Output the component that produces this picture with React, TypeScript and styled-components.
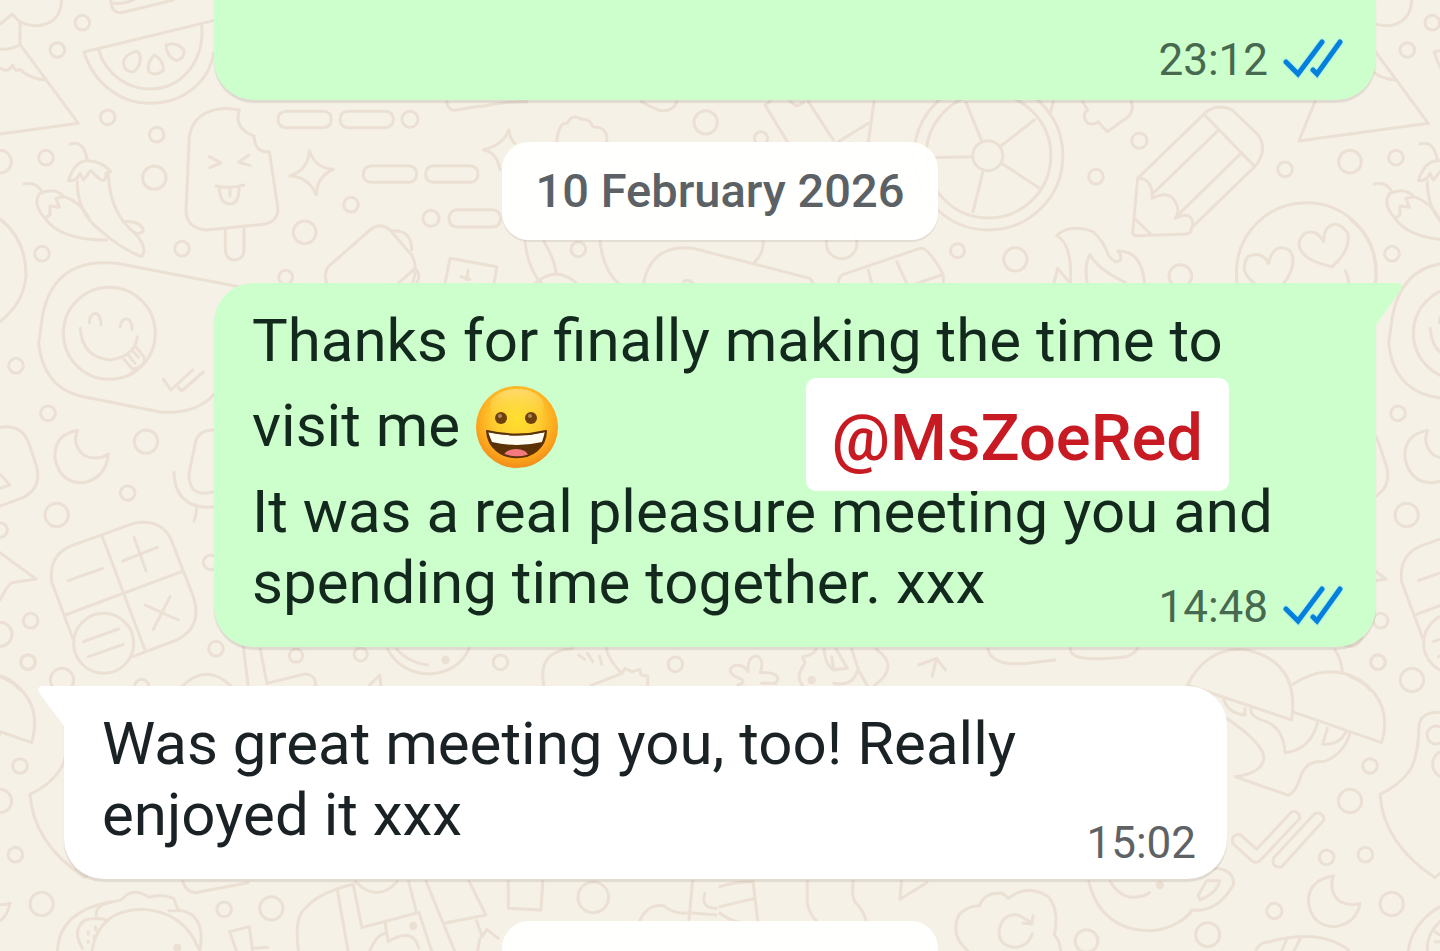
import React from 'react';
import styled, { createGlobalStyle } from 'styled-components';

const GlobalStyle = createGlobalStyle`
  * { box-sizing: border-box; }
  body { margin: 0; background: #f5f1e7; }
`;

const Screen = styled.main`
  position: relative;
  height: 100vh;
  overflow: hidden;
  background: #f5f1e7;
  font-family: Roboto, "Liberation Sans", sans-serif;
  color: #1b2226;
`;

const Wallpaper = styled.svg`
  position: absolute;
  top: 0;
  left: 0;
  fill: none;
  stroke: #ebe0d3;
  stroke-width: 3;
  stroke-linecap: round;
  stroke-linejoin: round;

  path, ellipse { vector-effect: non-scaling-stroke; }
`;

const Thread = styled.div`
  position: relative;
  display: flex;
  flex-direction: column;
`;

const Bubble = styled.article<{ $out?: boolean; $continued?: boolean }>`
  position: relative;
  display: grid;
  min-height: ${p => (p.$continued ? '100px' : '0')};
  margin: ${p => (p.$out ? '0 64px 0 214px' : '39px 213px 0 64px')};
  background: ${p => (p.$out ? '#cdffcd' : '#ffffff')};
  color: ${p => (p.$out ? '#14291d' : '#1b2226')};
  border-radius: ${p =>
    p.$continued ? '0 0 40px 40px' : p.$out ? '40px 0 40px 40px' : '0 40px 40px 40px'};
  box-shadow: 0 3px 1px rgba(70, 60, 50, 0.12);
`;

const Tail = styled.svg<{ $out?: boolean }>`
  position: absolute;
  top: 0;
  ${p => (p.$out ? 'left: 100%;' : 'right: 100%;')}
  fill: ${p => (p.$out ? '#cdffcd' : '#ffffff')};
`;

const Text = styled.p`
  grid-area: 1 / 1;
  margin: 0;
  padding: 22px 38px 29px;
  font-size: 60px;
  line-height: 71px;
`;

const Meta = styled.footer<{ $out?: boolean }>`
  grid-area: 1 / 1;
  place-self: end;
  display: flex;
  align-items: center;
  gap: 15px;
  padding: ${p => (p.$out ? '0 33px 14px 0' : '0 31px 10px 0')};
  font-size: 44px;
  line-height: 52px;
  color: ${p => (p.$out ? '#47694f' : '#5e6265')};
`;

const DateChip = styled.div`
  align-self: center;
  min-width: 436px;
  min-height: 98px;
  margin: 42px 0 43px;
  padding: 0 34px;
  border-radius: 27px;
  background: rgba(255, 255, 254, 0.95);
  box-shadow: 0 2px 1px rgba(70, 60, 50, 0.1);
  font-size: 47px;
  font-weight: 500;
  line-height: 98px;
  text-align: center;
  color: #5b6164;
`;

const HandleTag = styled.strong`
  position: absolute;
  top: 95px;
  right: 147px;
  height: 113px;
  padding: 0 26px;
  border-radius: 10px;
  background: #fff;
  color: #c81a22;
  font-size: 65px;
  font-weight: 500;
  line-height: 121px;
`;

const EmojiIcon = styled.svg`
  width: 84px;
  height: 100px;
  vertical-align: -30px;
`;

type RegionProps = {
  x?: number;
  y?: number;
  sx?: number;
  dots?: number[][];
  pupils?: number[][];
  lines: string[];
};

/* A patch of doodles drawn on a grid three times finer than the page. */
function Region({ x = 0, y = 0, sx = 1 / 3, dots = [], pupils = [], lines }: RegionProps) {
  const k = 1 / 3 / sx;
  return (
    <g transform={`translate(${x} ${y}) scale(${sx} ${1 / 3})`}>
      {dots.map(([cx, cy, r]) => (
        <ellipse key={`${cx}-${cy}-${r}`} cx={cx} cy={cy} rx={r * k} ry={r} />
      ))}
      {pupils.map(([cx, cy]) => (
        <ellipse key={`${cx}-${cy}`} cx={cx} cy={cy} rx={8 * k} ry={8} fill="#ebe0d3" />
      ))}
      {lines.map(d => (
        <path key={d} d={d} />
      ))}
    </g>
  );
}

function Doodles() {
  return (
    <Wallpaper width="1440" height="951" viewBox="0 0 1440 951" aria-hidden="true">
      <g id="doodles-left">
        <Region
          dots={[
            [247, 68, 22], [172, 150, 22], [323, 352, 22], [470, 404, 22], [138, 473, 22],
            [0, 485, 34], [463, 533, 35], [546, 746, 22], [126, 761, 22], [1053, 614, 22],
            [914, 697, 34], [1230, 358, 24], [1293, 655, 24], [857, 832, 21],
          ]}
          lines={[
            'M0 72 L38 42 Q60 78 115 77 Q182 70 185 0',
            'M60 70 V133 L235 370 L0 402 M60 133 Q40 148 0 148',
            'M0 205 Q25 220 38 195 Q45 218 60 208 Q90 238 140 240',
            'M332 0 Q335 45 370 37 L520 0 M332 8 Q360 15 400 0',
            'M640 62 L252 156 C285 260 370 310 450 310 C560 310 630 235 640 160',
            'M296 150 C320 230 390 267 450 267 C550 265 615 180 605 72',
            'M405 155 Q372 165 370 190 Q375 218 400 215 Q425 200 420 165 Q415 152 405 155Z',
            'M463 165 Q440 185 446 215 Q465 230 490 212 Q492 180 463 165Z',
            'M498 135 Q530 125 552 150 Q555 175 530 182 Q500 172 498 135Z',
            'M718 330 Q700 385 762 408 Q765 460 808 455 L833 620 Q838 665 790 673 L620 690 Q558 685 558 630 L568 410 Q580 330 680 325 Z',
            'M628 470 L663 489 L630 503 M746 466 L716 487 L750 496 M648 558 Q690 567 732 555 M657 560 Q660 612 690 612 Q718 610 717 560 M690 565 V588',
            'M676 688 V750 Q678 780 704 780 Q732 778 732 750 V682',
            'M928 452 Q945 505 1000 508 Q950 530 949 585 Q925 530 870 528 Q925 510 928 452Z',
            'M210 432 Q250 418 262 480',
            'M205 542 Q225 480 265 482 Q310 485 332 515 L318 520 Q318 550 300 538 L272 512 L250 540 L240 520 Q230 545 205 542',
            'M232 545 Q232 640 300 690 Q360 745 425 770 Q445 745 405 700 Q330 640 325 525',
            'M72 552 Q110 545 125 575 M135 655 Q95 610 120 580 Q165 560 192 590 L168 595 L178 622 L150 618 L150 645 L135 655 Q180 720 320 720 M192 590 Q240 605 268 655 M368 665 Q420 660 430 690 Q425 705 405 698',
            'M0 657 Q80 720 78 830 Q70 910 0 965',
            'M980 850 Q970 820 985 800 L1110 690 Q1140 665 1170 690 L1235 765 Q1255 800 1238 850 M1178 692 Q1235 690 1235 750 M1245 805 Q1265 825 1250 850 M1245 805 L1195 850',
            'M1335 850 L1350 775 L1490 800 M1383 830 L1410 838 M1404 810 L1400 840',
            'M1340 305 Q1345 335 1370 330 L1440 318',
            'M858 334 H970 Q994 336 994 358 Q994 382 970 383 H858 Q834 382 834 358 Q834 336 858 334Z',
            'M1044 334 H1156 Q1180 336 1180 358 Q1180 382 1156 383 H1044 Q1020 382 1020 358 Q1020 336 1044 334Z',
            'M1114 497 H1226 Q1250 499 1250 522 Q1250 546 1226 547 H1114 Q1090 546 1090 522 Q1090 499 1114 497Z',
            'M1301 497 H1410 Q1434 499 1434 522 Q1434 546 1410 547 H1301 Q1277 546 1277 522 Q1277 499 1301 497Z',
            'M1371 629 H1478 Q1502 632 1502 655 Q1502 680 1478 681 H1371 Q1347 680 1347 655 Q1347 632 1371 629Z',
          ]}
        />
        <Region
          y={240}
          dots={[
            [328, 280, 138], [48, 377, 22], [144, 520, 22], [438, 605, 35], [383, 759, 22],
            [170, 825, 35], [0, 870, 22], [92, 1142, 22], [84, 1267, 22], [0, 1183, 36],
            [186, 1320, 35], [648, 1226, 22], [632, 967, 22], [425, 1340, 22], [311, 1210, 90],
          ]}
          lines={[
            'M725 142 L350 70 Q160 50 127 230 L116 310 Q130 440 240 468 L480 516 Q590 525 645 460',
            'M268 248 Q268 222 288 220 Q303 225 303 255 M360 260 Q365 235 380 236 Q396 240 396 268',
            'M241 265 Q245 350 330 360 Q405 350 412 290',
            'M372 358 L398 388 Q440 380 432 350 L408 322 M385 345 L405 370 M400 335 L415 352',
            'M490 418 L513 450 L578 390 M535 443 L545 453 L610 396',
            'M233 571 Q160 585 165 655 Q180 730 250 728 Q318 715 325 642 Q290 665 250 645 Q215 610 233 571Z',
            'M0 562 Q70 550 90 620 L110 680 Q125 745 70 772 L0 798 M0 703 L30 735 L0 745',
            'M0 938 L108 1017 L35 1028 Q20 1040 0 1080',
            'M642 570 Q590 570 585 615 L567 700 Q565 760 615 760 L642 755 M522 697 Q525 800 625 802 L642 800 M590 805 Q590 825 582 843',
            'M218 1195 L155 1025 Q145 945 215 917 L400 850 Q480 835 512 895 L580 1070 Q610 1160 530 1200 L398 1250 M305 885 L437 1235 M195 1125 L545 995',
            'M205 1022 L308 985 M368 963 L472 922 M402 892 L438 992 M435 1095 L535 1140 M510 1070 L460 1168 M250 1205 L355 1167 M265 1250 L370 1213',
            'M545 1340 Q620 1265 695 1340 M0 1310 Q40 1325 60 1350',
          ]}
        />
      </g>
      <use href="#doodles-left" x="1350" />

      <Region
        x={480}
        y={90}
        dots={[[677, 97, 35], [843, 145, 20], [295, 478, 22], [1085, 460, 46]]}
        lines={[
          'M60 240 Q50 185 10 180 Q70 165 86 120 Q92 150 105 160',
          'M230 160 Q235 95 262 100 Q275 70 305 88 Q330 85 338 110 Q385 110 380 155',
          'M485 35 Q510 50 540 62 Q580 65 590 35 M0 50 Q70 35 140 35',
          'M925 160 L855 45 L870 35 M985 35 L1060 150 M930 35 L950 48 L970 38 M1075 155 L1165 100 M1182 35 L1165 155',
          'M135 455 Q145 540 185 580 M192 455 Q225 510 228 550 M165 580 Q230 525 290 580 M360 455 Q370 540 415 580',
          'M490 580 Q515 460 640 475 L990 565 L1000 580 M850 455 Q850 490 825 515 M610 575 Q625 565 640 580',
          'M1075 580 Q1075 560 1090 553 L1320 475 Q1345 470 1390 555 V575 M1165 540 L1175 580 M1250 515 L1280 580 M1310 580 L1385 555',
          'M50 535 L42 580',
        ]}
      />

      <Region
        x={900}
        y={90}
        sx={0.3444}
        dots={[
          [257, 197, 223], [257, 197, 187], [255, 197, 45], [695, 152, 23], [569, 260, 22],
          [1118, 238, 22], [167, 482, 21], [335, 508, 35], [814, 558, 34], [1180, 548, 210],
        ]}
        lines={[
          'M238 155 L192 38 M293 168 L390 90 M298 222 L403 293 M242 240 L212 365 M210 200 L75 203',
          'M690 265 L890 65 Q925 40 965 60 L1040 135 Q1070 180 1030 230 L845 415 Q850 432 820 433 L685 437 Q675 437 676 425 L690 265',
          'M885 75 L1030 230 M925 120 L735 310 M990 190 L800 382 M690 265 Q735 265 732 325 Q790 295 805 350 Q810 370 800 385 Q840 365 848 390 Q855 405 845 415 M680 385 L728 432',
          'M530 35 L545 60 Q525 75 545 100 Q570 105 575 95 L602 125 L665 78 Q680 60 672 35 M435 75 L445 35',
          'M1205 35 L1158 153 L1307 132',
          'M1070 520 Q1050 480 1010 500 Q985 540 1020 572 L1040 590 H1105 L1125 565 Q1155 510 1130 480 Q1085 455 1070 520',
          'M1230 455 Q1210 415 1175 430 Q1140 465 1180 500 Q1205 520 1255 530 Q1310 480 1300 430 Q1270 385 1240 415 Q1230 430 1230 455',
          'M1293 542 Q1303 560 1302 578',
          'M455 437 Q490 400 560 425 Q590 450 605 495 Q625 525 640 510 Q645 495 632 483 Q700 480 710 578 M455 437 Q500 460 495 578 M447 578 L458 535 L490 575 M543 578 Q535 520 552 493 Q570 535 655 578',
        ]}
      />

      <Region
        x={200}
        y={620}
        sx={0.4464}
        dots={[[215, 107, 20], [360, 103, 20], [673, 127, 22], [1065, 133, 22]]}
        pupils={[[550, 120], [1370, 180]]}
        lines={[
          'M97 80 L108 197 M135 88 L150 190 L235 162 Q262 165 258 197 M380 195 L403 165 L405 197',
          'M420 88 Q450 160 515 162 Q580 155 603 85 M440 88 Q470 130 510 135',
          'M770 197 Q755 90 835 86 M910 85 Q915 120 945 160 L875 197 M945 160 L952 145 L968 155 L985 148 L988 165 L1003 168 V197 M848 105 L862 118 M868 100 L880 125 M895 108 L900 133',
          'M1205 195 Q1230 185 1200 170 Q1175 150 1200 135 Q1220 135 1228 155 Q1225 110 1248 108 Q1265 120 1255 158 Q1290 155 1295 175 L1290 190 H1258',
          'M1380 88 Q1375 105 1350 110 L1355 130 L1348 145 Q1335 175 1350 197 M1398 88 Q1400 135 1420 150 L1415 110 M1425 88 Q1440 120 1450 145 L1418 150 M1460 88 L1475 150 L1495 197 M1420 190 Q1460 200 1472 155 M1515 88 Q1570 140 1510 197',
          'M1610 135 L1650 115 L1670 150 M1650 115 L1640 170 M1765 88 Q1775 140 1855 130 L1915 120 M1950 85 Q1945 130 2075 110 Q2095 100 2100 85',
        ]}
      />

      <g id="doodles-right">
        <Region
          x={1180}
          y={640}
          dots={[
            [594, 66, 22], [570, 378, 22], [510, 483, 35], [440, 652, 22], [556, 644, 22],
            [635, 792, 35], [283, 813, 23], [83, 884, 36], [768, 285, 27], [800, 372, 42],
          ]}
          lines={[
            'M22 135 Q85 15 200 30 Q360 65 335 240 Z',
            'M338 133 Q440 65 540 120 Q640 190 605 308 L345 218',
            'M465 30 Q485 60 487 97 M132 180 Q145 220 195 225 L195 205 M213 207 Q210 230 250 242 Q310 260 315 338 Q390 330 412 250',
            'M140 235 Q250 310 252 355 Q245 400 165 410 L325 466 Q350 455 365 400 Q385 360 430 365 Q490 345 510 280 M442 265 L428 313 Q480 315 498 275',
            'M160 612 Q150 585 180 583 L230 628 L335 515 Q355 510 360 535 L240 662 Q228 672 215 662 Z',
            'M280 655 L405 520 Q430 515 432 540 L305 680 Q275 685 280 655Z',
            'M460 708 Q385 720 385 785 Q395 860 465 860 Q530 850 540 790 Q510 800 480 785 Q445 755 460 708Z',
            'M105 685 Q165 690 160 735 Q110 820 35 810 Q20 835 0 845 M80 722 H120 Q110 760 60 780 L55 765 Z',
            'M228 930 Q240 905 270 905 Q420 865 505 930 M320 898 L305 933 M362 893 L342 933',
            'M780 217 Q720 215 717 260 Q715 350 690 390 Q660 435 600 463 Q610 610 765 713 L780 700',
          ]}
        />
      </g>
      <use href="#doodles-right" x="-1350" />
      <Region
        x={1180}
        y={640}
        lines={['M685 933 Q695 850 780 800 M742 930 Q740 880 780 845 M765 875 L780 885 M765 905 H780']}
      />

      <Region
        y={860}
        sx={0.4592}
        dots={[[488, 148, 22], [591, 145, 35], [1292, 112, 46]]}
        pupils={[[386, 264], [900, 198]]}
        lines={[
          'M125 273 Q130 150 245 125 Q265 125 275 105 Q295 85 325 112 Q350 100 378 115 L388 150 Q450 160 435 273',
          'M210 170 Q205 135 245 125 M200 273 Q215 150 310 148 Q400 155 432 265 M180 265 Q155 210 185 180 Q215 170 235 182 M368 152 H390',
          'M192 215 V222 M208 200 V210 M205 228 V235 M192 242 V247',
          'M398 65 Q405 95 425 98 L540 68 M650 273 Q640 170 665 145 Q690 100 770 72 M770 78 L788 203 L912 157 L940 273',
          'M775 65 Q820 130 865 65 M735 92 L758 273 M890 65 L907 157 M928 65 L990 273 M1022 65 L1058 165 L972 188',
          'M515 273 L500 215 L543 200 L550 273 M552 265 L583 262 M838 183 L845 245 Q900 200 912 265 M805 273 Q820 225 838 220',
          'M1038 182 L1050 230 L1060 208 L1085 235 M1045 235 L1040 273 M1107 65 V145 L1178 150 L1182 65',
          'M1392 185 Q1410 130 1445 137 Q1470 165 1500 158 L1560 165 M1508 65 L1500 185 M1535 100 Q1525 145 1560 145',
        ]}
      />

      <Region
        x={720}
        y={860}
        sx={0.4592}
        dots={[[798, 243, 34]]}
        pupils={[[958, 75]]}
        lines={[
          'M803 65 Q830 210 935 212 Q990 210 1030 150 M850 65 Q870 110 900 112 Q925 110 935 98',
          'M540 273 Q500 225 520 165 Q540 135 565 138 Q575 95 615 100 L628 115 Q670 70 715 110 Q740 150 728 225 Q740 240 742 273',
          'M680 222 Q670 262 640 262 Q605 255 608 210 Q615 160 650 165 L680 190 M682 168 L678 192 L660 190',
          'M190 65 V130 Q195 165 212 185 M290 65 Q285 120 300 135 Q315 160 318 182 M395 65 L392 118 L450 68 M72 65 L82 183 M0 140 L75 115 M0 160 Q25 185 40 185 M0 80 Q30 65 70 66',
        ]}
      />
    </Wallpaper>
  );
}

function ReadTicks() {
  return (
    <svg width="60" height="44" viewBox="0 3 60 44" fill="none" role="img" aria-label="Read">
      <path
        d="M3 27 L15 39 L39 7 M30 35 L34 39 L57 7"
        stroke="#8fe6ff"
        strokeWidth="7"
        strokeLinecap="round"
        opacity="0.5"
      />
      <path
        d="M3 27 L15 39 L39 7 M30 35 L34 39 L57 7"
        stroke="#0480dc"
        strokeWidth="5"
        strokeLinecap="round"
      />
    </svg>
  );
}

function Grin() {
  const mouth = 'M12 54 Q42 61 71 54 C70 89 14 89 12 54Z';
  return (
    <EmojiIcon viewBox="0 -1 84 100" role="img" aria-label="grinning face">
      <defs>
        <radialGradient id="face" cx="50%" cy="40%" r="60%">
          <stop offset="0" stopColor="#ffe02e" />
          <stop offset="0.5" stopColor="#fdca2f" />
          <stop offset="0.8" stopColor="#fca61c" />
          <stop offset="1" stopColor="#f18d1b" />
        </radialGradient>
        <linearGradient id="shine" x1="0" y1="0" x2="0" y2="1">
          <stop offset="0" stopColor="#fff3b0" stopOpacity="0.5" />
          <stop offset="1" stopColor="#ffe02e" stopOpacity="0" />
        </linearGradient>
        <clipPath id="mouth">
          <path d={mouth} />
        </clipPath>
      </defs>
      <circle cx="42" cy="50" r="41" fill="url(#face)" />
      <ellipse cx="42" cy="29" rx="27" ry="17" fill="url(#shine)" />
      <circle cx="26" cy="41" r="6" fill="#6d4109" />
      <circle cx="56" cy="41" r="6" fill="#6d4109" />
      <circle cx="25" cy="39" r="2" fill="#a9895c" />
      <circle cx="55" cy="39" r="2" fill="#a9895c" />
      <path d={mouth} fill="#5b3206" />
      <g clipPath="url(#mouth)">
        <path d="M13 55 Q42 62 70 55 L67 65 Q42 71 17 65Z" fill="#fffdf2" />
        <ellipse cx="41" cy="79" rx="12" ry="7" fill="#f4797f" />
      </g>
      <path d={mouth} fill="none" stroke="#5b3206" strokeWidth="2" strokeLinejoin="round" />
    </EmojiIcon>
  );
}

export default function App() {
  return (
    <Screen>
      <GlobalStyle />
      <Doodles />
      <Thread>
        <Bubble $out $continued>
          <Meta $out>
            <time>23:12</time>
            <ReadTicks />
          </Meta>
        </Bubble>

        <DateChip>10 February 2026</DateChip>

        <Bubble $out>
          <Tail $out width="26" height="44" viewBox="0 0 26 44" aria-hidden="true">
            <path d="M0 0 H23 Q28 2 24 8 L0 42 Z" />
          </Tail>
          <Text>
            Thanks for finally making the time to visit me <Grin />
            <br />
            It was a real pleasure meeting you and spending time together. xxx
          </Text>
          <Meta $out>
            <time>14:48</time>
            <ReadTicks />
          </Meta>
          <HandleTag>@MsZoeRed</HandleTag>
        </Bubble>

        <Bubble>
          <Tail width="26" height="44" viewBox="0 0 26 44" aria-hidden="true">
            <path d="M26 0 H3 Q-2 2 2 8 L26 40 Z" />
          </Tail>
          <Text>Was great meeting you, too! Really enjoyed it xxx</Text>
          <Meta>
            <time>15:02</time>
          </Meta>
        </Bubble>

        <DateChip aria-hidden="true" />
      </Thread>
    </Screen>
  );
}
